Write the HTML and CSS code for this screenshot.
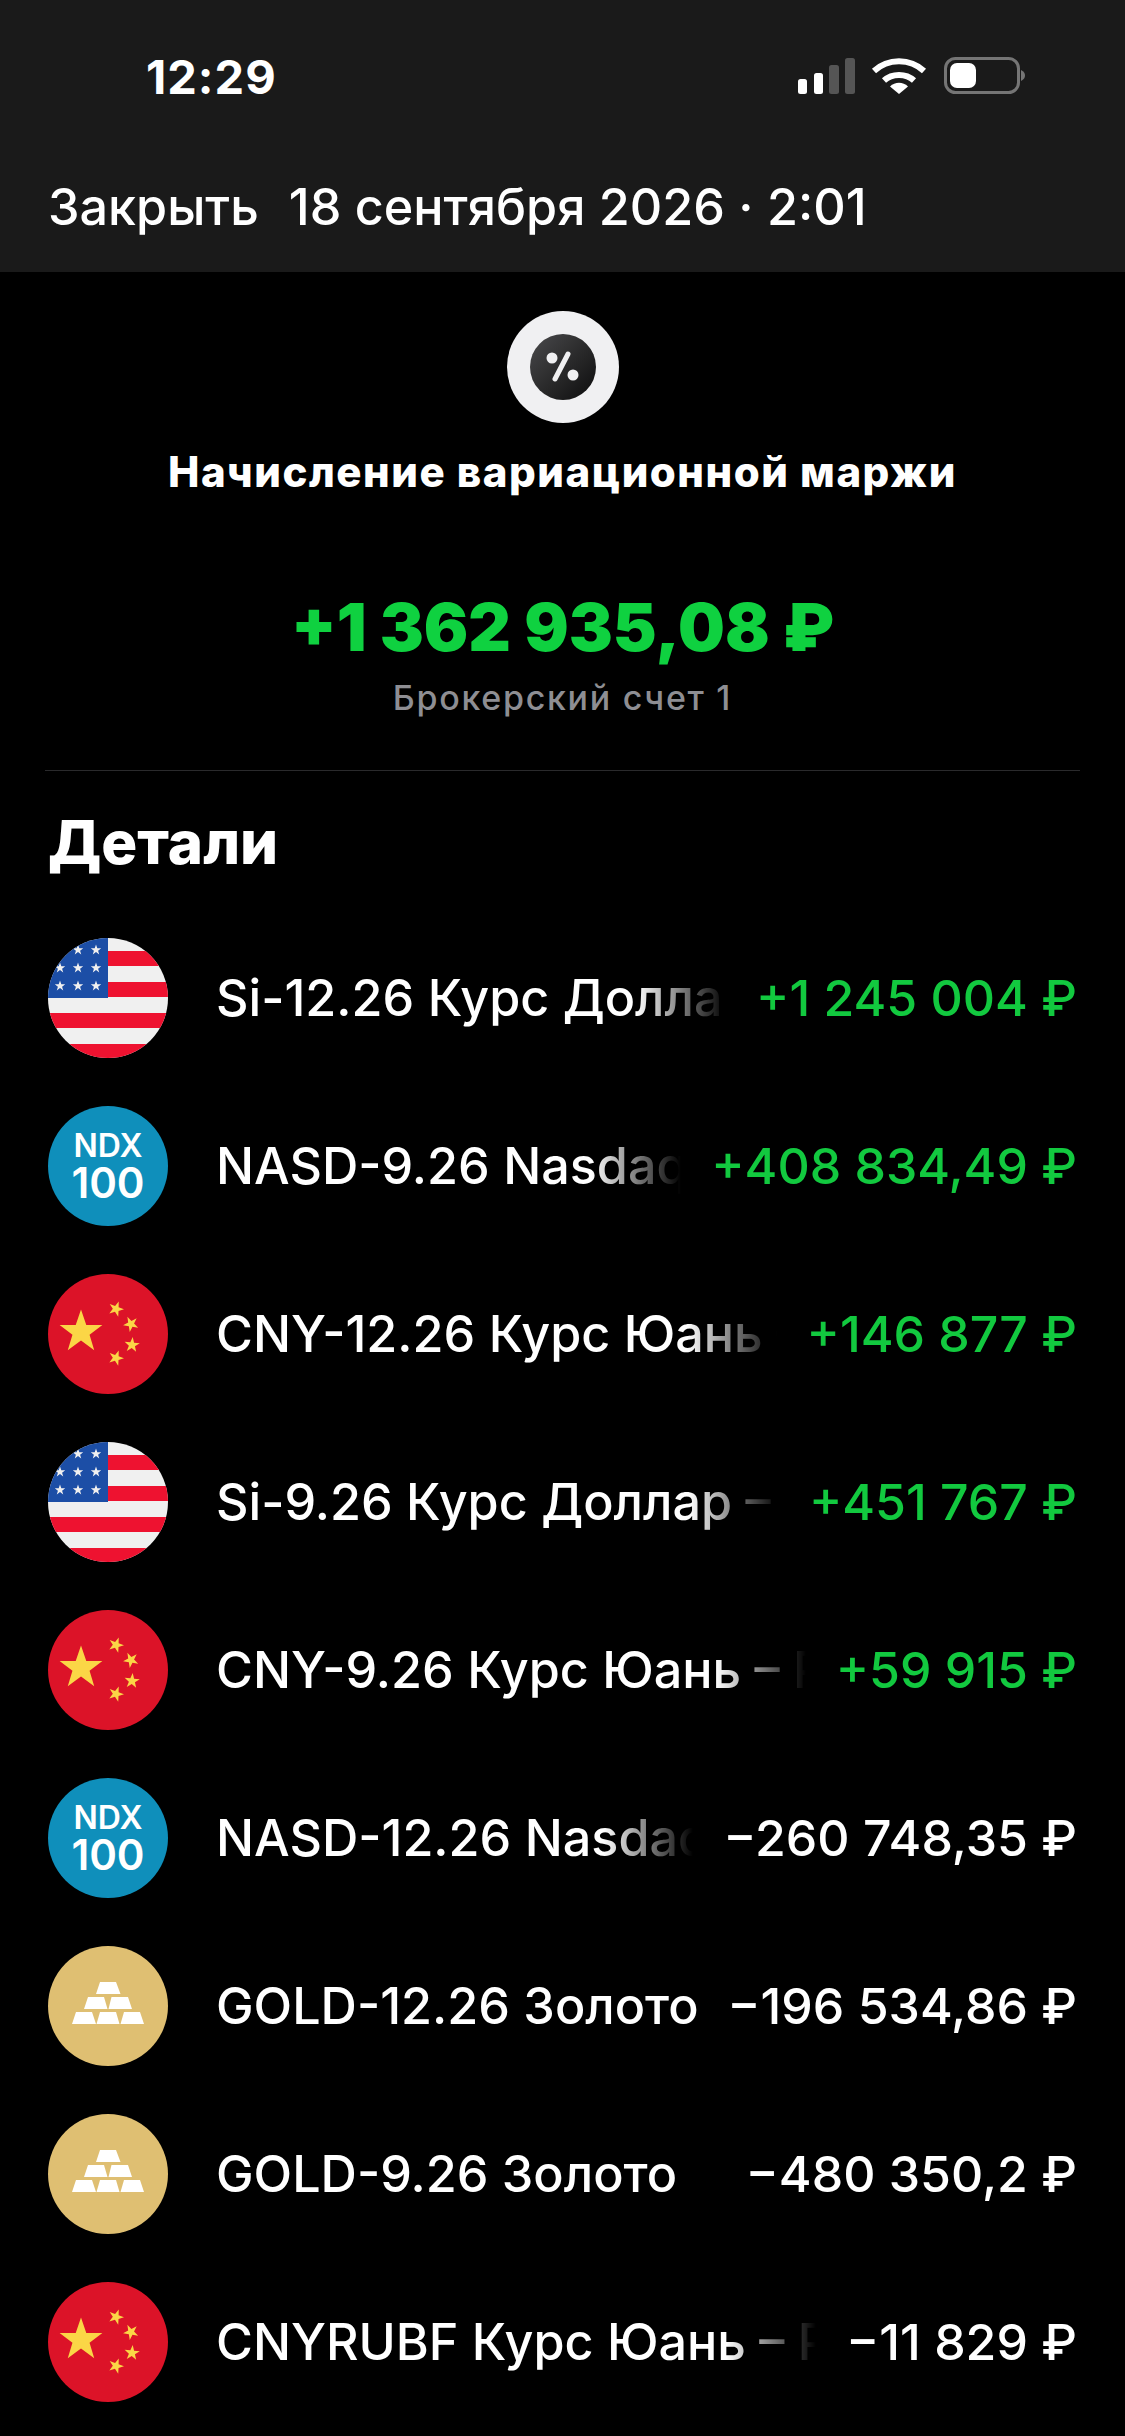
FILE: index.html
```html
<!DOCTYPE html>
<html lang="ru">
<head>
  <meta charset="UTF-8" />
  <title>Начисление вариационной маржи</title>
  <meta name="viewport" content="width=device-width, initial-scale=1.0" />
  <link rel="stylesheet" href="styles.css">
</head>
<body>

<!-- Icon sprites -->
<svg class="sprites" width="0" height="0">
  <defs>
    <polygon id="star" points="0,-10 2.35,-3.09 9.51,-3.09 3.8,1.18 5.88,8.09 0,3.82 -5.88,8.09 -3.8,1.18 -9.51,-3.09 -2.35,-3.09" />
    <clipPath id="round"><circle cx="60" cy="60" r="60" /></clipPath>

    <symbol id="flag-us" viewBox="0 0 120 120">
      <g clip-path="url(#round)">
        <rect width="120" height="120" fill="#f0f0f0" />
        <rect x="60" y="13" width="60" height="15" fill="#ee1230" />
        <rect x="60" y="44" width="60" height="15" fill="#ee1230" />
        <rect y="75" width="120" height="15" fill="#ee1230" />
        <rect y="106" width="120" height="14" fill="#ee1230" />
        <rect width="60" height="60" fill="#1c4ea6" />
        <g fill="#f0f0f0">
          <use href="#star" transform="translate(30 12) scale(.55)" />
          <use href="#star" transform="translate(48 12) scale(.55)" />
          <use href="#star" transform="translate(12 30) scale(.55)" />
          <use href="#star" transform="translate(30 30) scale(.55)" />
          <use href="#star" transform="translate(48 30) scale(.55)" />
          <use href="#star" transform="translate(12 48) scale(.55)" />
          <use href="#star" transform="translate(30 48) scale(.55)" />
          <use href="#star" transform="translate(48 48) scale(.55)" />
        </g>
      </g>
    </symbol>

    <symbol id="flag-cn" viewBox="0 0 120 120">
      <circle cx="60" cy="60" r="60" fill="#dc1328" />
      <g fill="#fbd646">
        <use href="#star" transform="translate(33 58) scale(2.25)" />
        <use href="#star" transform="translate(68 35) rotate(20) scale(.8)" />
        <use href="#star" transform="translate(83 50) rotate(45) scale(.8)" />
        <use href="#star" transform="translate(84 71) rotate(5) scale(.8)" />
        <use href="#star" transform="translate(68 84) rotate(20) scale(.8)" />
      </g>
    </symbol>

    <symbol id="gold" viewBox="0 0 120 120">
      <circle cx="60" cy="60" r="60" fill="#dfbf72" />
      <g fill="#fff">
        <path d="M52 36H68L72.5 48H48Z" />
        <path d="M40 51H56L59.500 63H36Z" />
        <path d="M63.500 51H80L84 63H60.500Z" />
        <path d="M28 66H44L48 78H24Z" />
        <path d="M52 66H68L71.500 78H48.500Z" />
        <path d="M76 66H92L96 78H72.500Z" />
      </g>
    </symbol>
  </defs>
</svg>

<div class="phone">

  <header class="topbar">
    <div class="status">
      <span class="clock">12:29</span>
      <svg class="status-icons" width="230" height="38" viewBox="0 0 230 38">
        <rect x="0" y="22" width="9" height="15" rx="2.500" fill="#fff" />
        <rect x="16" y="16" width="9" height="21" rx="2.500" fill="#fff" />
        <rect x="31" y="8" width="10" height="29" rx="2.500" fill="#555" />
        <rect x="47" y="1" width="10" height="36" rx="2.500" fill="#555" />
        <path d="M76 14C90 1 112 1 126 14" fill="none" stroke="#fff" stroke-width="6" />
        <path d="M86 23.500C94 16 108 16 116 23.500" fill="none" stroke="#fff" stroke-width="6" />
        <path d="M92 29.500C97 24.500 105 24.500 110 29.500L101 37Z" fill="#fff" />
        <rect x="147.500" y="1.500" width="73" height="34" rx="10" fill="none" stroke="#757575" stroke-width="3" />
        <rect x="152" y="6" width="26" height="25" rx="7" fill="#fff" />
        <path d="M223 13C226 14.500 227 16.500 227 18.500S226 22.500 223 24Z" fill="#757575" />
      </svg>
    </div>
    <nav class="nav">
      <span>Закрыть</span>
      <span>18 сентября 2026 · 2:01</span>
    </nav>
  </header>

  <section class="summary">
    <div class="op-icon">
      <svg width="66" height="66" viewBox="0 0 66 66">
        <defs>
          <linearGradient id="opFill" x1="0" y1="0" x2="1" y2="1">
            <stop offset="0" stop-color="#4a4a4c" />
            <stop offset="1" stop-color="#0c0c0c" />
          </linearGradient>
        </defs>
        <circle cx="33" cy="33" r="33" fill="url(#opFill)" />
        <circle cx="22" cy="24" r="5.500" fill="#f0f0f2" />
        <circle cx="43" cy="41" r="5.500" fill="#f0f0f2" />
        <path d="M38 20L25 45" stroke="#f0f0f2" stroke-width="5" stroke-linecap="round" />
      </svg>
    </div>
    <h1 class="op-title">Начисление вариационной маржи</h1>
    <div class="op-sum">+1 362 935,08 ₽</div>
    <div class="op-account">Брокерский счет 1</div>
  </section>

  <section class="details">
    <h2>Детали</h2>

    <div class="row">
      <svg class="logo"><use href="#flag-us" /></svg>
      <span class="name fade">Si-12.26 Курс Доллар – Рубль</span>
      <span class="amount up">+1 245 004 ₽</span>
    </div>
    <div class="row">
      <div class="logo ndx"><b>NDX</b><b>100</b></div>
      <span class="name fade">NASD-9.26 Nasdaq 100</span>
      <span class="amount up">+408 834,49 ₽</span>
    </div>
    <div class="row">
      <svg class="logo"><use href="#flag-cn" /></svg>
      <span class="name fade">CNY-12.26 Курс Юань – Рубль</span>
      <span class="amount up">+146 877 ₽</span>
    </div>
    <div class="row">
      <svg class="logo"><use href="#flag-us" /></svg>
      <span class="name fade">Si-9.26 Курс Доллар – Рубль</span>
      <span class="amount up">+451 767 ₽</span>
    </div>
    <div class="row">
      <svg class="logo"><use href="#flag-cn" /></svg>
      <span class="name fade">CNY-9.26 Курс Юань – Рубль</span>
      <span class="amount up">+59 915 ₽</span>
    </div>
    <div class="row">
      <div class="logo ndx"><b>NDX</b><b>100</b></div>
      <span class="name fade">NASD-12.26 Nasdaq 100</span>
      <span class="amount">−260 748,35 ₽</span>
    </div>
    <div class="row">
      <svg class="logo"><use href="#gold" /></svg>
      <span class="name">GOLD-12.26 Золото</span>
      <span class="amount">−196 534,86 ₽</span>
    </div>
    <div class="row">
      <svg class="logo"><use href="#gold" /></svg>
      <span class="name">GOLD-9.26 Золото</span>
      <span class="amount">−480 350,2 ₽</span>
    </div>
    <div class="row">
      <svg class="logo"><use href="#flag-cn" /></svg>
      <span class="name fade">CNYRUBF Курс Юань – Рубль</span>
      <span class="amount">−11 829 ₽</span>
    </div>
  </section>

</div>

</body>
</html>
```

FILE: styles.css
```css
html, body {
  margin: 0;
  padding: 0;
  background-color: #000;
}

body {
  font-family: 'Inter', 'Liberation Sans', sans-serif;
  color: #fff;
}

.sprites {
  display: block;
  height: 0;
}

.phone {
  width: 1125px;
  height: 2436px;
  overflow: hidden;
}

/* Top bar */
.topbar {
  height: 272px;
  background-color: #1a1a1a;
  display: flex;
  flex-direction: column;
}

.status {
  height: 152px;
  padding: 0 97px 0 146px;
  display: flex;
  align-items: center;
  justify-content: space-between;
}

.clock {
  font-size: 47px;
  font-weight: 700;
  letter-spacing: 1px;
}

.nav {
  display: flex;
  gap: 30px;
  padding-left: 48px;
  font-size: 50.3px;
  line-height: 110px;
  font-weight: 500;
}

/* Operation summary */
.summary {
  display: flex;
  flex-direction: column;
  align-items: center;
  margin: 0 45px;
  padding-top: 39px;
  height: 499px;
  box-sizing: border-box;
  border-bottom: 1px solid #2a2a2c;
}

.op-icon {
  width: 112px;
  height: 112px;
  border-radius: 50%;
  background-color: #f0f0f2;
  display: flex;
  align-items: center;
  justify-content: center;
}

.op-title {
  margin: 26px 0 0;
  font-size: 42px;
  line-height: 46px;
  font-weight: 800;
  letter-spacing: 1.5px;
  white-space: nowrap;
}

.op-sum {
  margin-top: 94px;
  font-size: 66px;
  line-height: 76px;
  font-weight: 900;
  color: #0fd140;
}

.op-account {
  margin-top: 13px;
  font-size: 34px;
  line-height: 40px;
  font-weight: 500;
  letter-spacing: 1.7px;
  color: #8e8e93;
}

/* Details list */
.details {
  padding: 0 48px;
}

.details h2 {
  margin: 38px 0 0;
  height: 105px;
  font-size: 60px;
  line-height: 66px;
  font-weight: 800;
}

.row {
  height: 168px;
  display: flex;
  align-items: center;
}

.logo {
  flex: none;
  width: 120px;
  height: 120px;
  margin-right: 48px;
}

.ndx {
  border-radius: 50%;
  background-color: #0f8fbb;
  display: flex;
  flex-direction: column;
  align-items: center;
  justify-content: center;
}

.ndx b {
  font-size: 32px;
  line-height: 33px;
  font-weight: 600;
}

.ndx b + b {
  font-size: 42px;
  line-height: 41px;
}

.name {
  flex: 1;
  min-width: 0;
  overflow: hidden;
  white-space: nowrap;
  font-size: 50.3px;
  line-height: 64px;
  font-weight: 500;
}

.fade {
  -webkit-mask-image: linear-gradient(to right, #000 calc(100% - 90px), transparent);
  mask-image: linear-gradient(to right, #000 calc(100% - 90px), transparent);
}

.amount {
  flex: none;
  margin-left: 30px;
  white-space: nowrap;
  font-size: 50px;
  line-height: 64px;
  font-weight: 500;
}

.up {
  color: #12c93f;
}
```
